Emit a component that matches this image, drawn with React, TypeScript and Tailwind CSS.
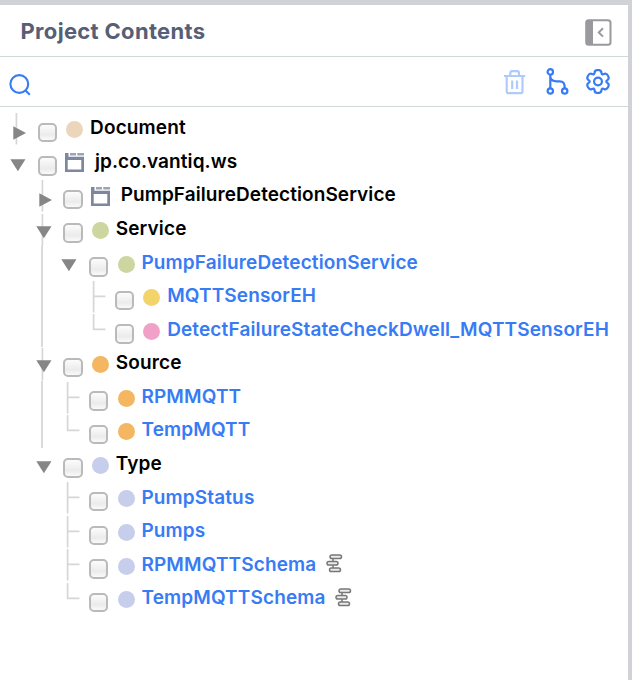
import React from "react";

type Row = {
  label: string;
  level: 0 | 1 | 2 | 3;
  kind: "open" | "closed" | "tee" | "end";
  color: string;
  link?: boolean;
  schema?: boolean;
  line?: boolean;
  trunk?: boolean;
};

const rows: Row[] = [
  { label: "Document", level: 0, kind: "closed", color: "bg-[#ecd6bb]", line: true },
  { label: "jp.co.vantiq.ws", level: 0, kind: "open", color: "" },
  { label: "PumpFailureDetectionService", level: 1, kind: "closed", color: "", line: true },
  { label: "Service", level: 1, kind: "open", color: "bg-[#ccd69e]", line: true },
  { label: "PumpFailureDetectionService", level: 2, kind: "open", color: "bg-[#ccd69e]", link: true, trunk: true },
  { label: "MQTTSensorEH", level: 3, kind: "tee", color: "bg-[#f3d46b]", link: true, trunk: true },
  { label: "DetectFailureStateCheckDwell_MQTTSensorEH", level: 3, kind: "end", color: "bg-[#f1a1c8]", link: true, trunk: true },
  { label: "Source", level: 1, kind: "open", color: "bg-[#f4b660]", line: true },
  { label: "RPMMQTT", level: 2, kind: "tee", color: "bg-[#f4b660]", link: true, trunk: true },
  { label: "TempMQTT", level: 2, kind: "end", color: "bg-[#f4b660]", link: true, trunk: true },
  { label: "Type", level: 1, kind: "open", color: "bg-[#c7ceeb]" },
  { label: "PumpStatus", level: 2, kind: "tee", color: "bg-[#c7ceeb]", link: true },
  { label: "Pumps", level: 2, kind: "tee", color: "bg-[#c7ceeb]", link: true },
  { label: "RPMMQTTSchema", level: 2, kind: "tee", color: "bg-[#c7ceeb]", link: true, schema: true },
  { label: "TempMQTTSchema", level: 2, kind: "end", color: "bg-[#c7ceeb]", link: true, schema: true },
];

function Indent({ level, trunk }: { level: number; trunk?: boolean }) {
  return (
    <>
      {Array.from({ length: level }, (_, i) => (
        <span key={i} className="flex h-full w-[25.7px] shrink-0 pl-[15.6px]">
          {trunk && i === 1 && <span className="h-full w-[2px] bg-[#dadada]" />}
        </span>
      ))}
    </>
  );
}

function Switcher({ kind, line }: { kind: Row["kind"]; line?: boolean }) {
  return (
    <svg className="h-full w-[37.5px] shrink-0" viewBox="0 0 37.5 33.57" fill="none">
      {line && <path d={kind === "closed" ? "M16.4 1V32.5" : "M16.4 1V33.57"} stroke="#d6d6d6" strokeWidth="1.7" />}
      {kind === "closed" && <path d="M13.3 14.2L26 21L13.3 27.8Z" fill="#868686" />}
      {kind === "open" && <path d="M10.3 13.2H25.5L17.9 25.3Z" fill="#868686" />}
      {kind === "tee" && <path d="M16.6 1V32.5M16.6 16.3H28.5" stroke="#d6d6d6" strokeWidth="1.7" />}
      {kind === "end" && <path d="M16.6 1V16.3H28.5" stroke="#d6d6d6" strokeWidth="1.7" />}
    </svg>
  );
}

function PackageIcon() {
  return (
    <svg className="mt-[7.4px] ml-[8.2px] h-5 w-[19.5px] shrink-0" viewBox="0 0 19.5 20">
      <path fill="#7e879d" fillRule="evenodd" d="M0 0H3.5V3.7H19V19H0ZM2.7 7V16.4H16.3V7Z" />
      <path fill="#9ca3b4" d="M5 0H11V2.4H5ZM12.3 0H19V2.4H12.3Z" />
    </svg>
  );
}

function SchemaIcon() {
  return (
    <svg className="mt-[6px] ml-[9.5px] h-[19px] w-[17px] shrink-0" viewBox="0 0 17 19" fill="#ebebeb" stroke="#777" strokeWidth="1.5">
      <path d="M7 4.5V7.5M7 11V14" />
      <rect x="4" y="1" width="11.5" height="3.6" rx="1.8" />
      <rect x="1" y="7.5" width="11" height="3.6" rx="1.8" />
      <rect x="3.5" y="14" width="11" height="3.6" rx="1.8" />
    </svg>
  );
}

// Six-lobed gear outline: a closed quadratic spline through the midpoints of its control polygon.
function gearPath() {
  const pts: [number, number][] = [];
  for (let k = 0; k < 6; k++) {
    for (const [deg, r] of [[-16, 12], [16, 12], [30, 7.2]]) {
      const a = ((k * 60 + deg) * Math.PI) / 180;
      pts.push([12 + r * Math.sin(a), 12.5 - r * Math.cos(a)]);
    }
  }
  const mid = (i: number) => {
    const p = pts[i % pts.length];
    const q = pts[(i + 1) % pts.length];
    return `${((p[0] + q[0]) / 2).toFixed(2)} ${((p[1] + q[1]) / 2).toFixed(2)}`;
  };
  let d = `M${mid(pts.length - 1)}`;
  pts.forEach((p, i) => {
    d += `Q${p[0].toFixed(2)} ${p[1].toFixed(2)} ${mid(i)}`;
  });
  return d + "Z";
}

function TreeRow({ row }: { row: Row }) {
  return (
    <li className="flex h-[33.57px] items-start">
      <Indent level={row.level} trunk={row.trunk} />
      <Switcher kind={row.kind} line={row.line} />
      <span className="mt-[10.8px] size-[19.5px] shrink-0 rounded-[5px] border-2 border-[#bababa] bg-linear-to-b from-[#fcfcfc] via-[#ebebeb] via-65% to-[#fafafa]" />
      {row.color ? (
        <span className={`mt-[9.3px] ml-[9.2px] size-[17px] shrink-0 rounded-full ${row.color}`} />
      ) : (
        <PackageIcon />
      )}
      <span
        className={`mt-[0.35px] text-[19px] leading-[32px] font-semibold whitespace-nowrap ${
          row.color ? "ml-[6.9px] tracking-[0.13px]" : "ml-[10.3px] tracking-[0.08px]"
        } ${row.link ? "text-[#377bf5]" : "text-black"}`}
      >
        {row.label}
      </span>
      {row.schema && <SchemaIcon />}
    </li>
  );
}

export default function App() {
  return (
    <div className="h-[680px] w-[632px] overflow-hidden border-t-5 border-r-4 border-[#d1d1d8] bg-white font-[Inter,sans-serif]">
      <header className="flex h-[52px] items-center justify-between border-b border-[#d0d8d8] pt-[2px] pr-[16.4px] pl-[20.5px]">
        <h1 className="text-[22px] font-bold tracking-[0.32px] text-[#565f76]">Project Contents</h1>
        <svg className="mt-[1.4px] size-[27px]" viewBox="0 0 27 27" fill="none">
          <rect x="1.2" y="1.2" width="24.3" height="24.5" rx="2.5" stroke="#99999e" strokeWidth="2" />
          <path d="M1 1H8V26H1Z" fill="#99999e" />
          <path d="M18 9.2L13.8 13.4L18 17.6" stroke="#99999e" strokeWidth="2" />
        </svg>
      </header>
      <div className="flex h-[50px] items-center border-b border-[#d0d8d8] pr-[18px] pl-[9px] text-[#377bf5]">
        <svg className="mt-[6px] mr-auto size-[22px]" viewBox="0 0 22 22" fill="none" stroke="currentColor" strokeWidth="2.1">
          <circle cx="10.3" cy="10" r="8.9" />
          <path d="M16.5 16.5L20.8 20.8" />
        </svg>
        <svg className="mr-[20px] h-[26px] w-[22px] text-[#afcbfb]" viewBox="0 0 22 26" fill="none" stroke="currentColor" strokeWidth="2.2">
          <path d="M0 7H21.2M6.3 7V4Q6.3 2.2 8.1 2.2H13.2Q15 2.2 15 4V7M2.7 7V22.2Q2.7 24.2 4.7 24.2H16.5Q18.5 24.2 18.5 22.2V7M8.2 11.5V20M13 11.5V20" />
        </svg>
        <svg className="mr-[17px] h-[27px] w-[23px]" viewBox="0 0 23 27" fill="none" stroke="currentColor" strokeWidth="2.2">
          <circle cx="4.3" cy="3.9" r="2.7" />
          <circle cx="4.3" cy="23" r="2.7" />
          <circle cx="18.7" cy="23" r="2.7" />
          <path d="M4.3 6.6V20.3M4.3 9C5 12.4 7 13.3 10.5 13.3H13.5C17.5 13.3 18.7 15 18.7 20.3" />
        </svg>
        <svg className="h-[25px] w-6" viewBox="0 0 24 25" fill="none" stroke="currentColor" strokeWidth="2.2">
          <path d={gearPath()} />
          <circle cx="12" cy="12.5" r="3.9" />
        </svg>
      </div>
      <ul className="mt-[5px]">
        {rows.map((row, i) => (
          <TreeRow key={i} row={row} />
        ))}
      </ul>
    </div>
  );
}
